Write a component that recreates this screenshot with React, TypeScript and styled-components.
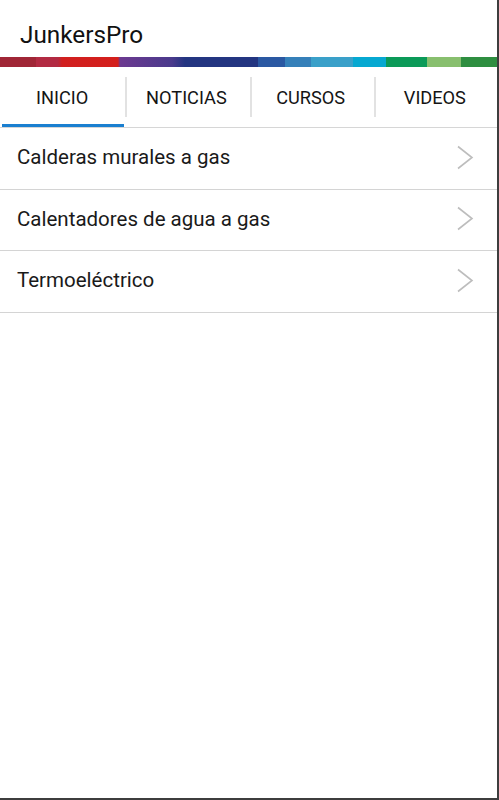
import React from 'react'
import styled, { createGlobalStyle } from 'styled-components'

const GlobalStyle = createGlobalStyle`
  html, body {
    margin: 0;
    padding: 0;
    background: #ffffff;
    font-family: Roboto, "Liberation Sans", Arial, sans-serif;
  }
`

const Screen = styled.div`
  box-sizing: border-box;
  width: 499px;
  height: 800px;
  background: #ffffff;
  border-right: 2px solid #3e3e3e;
  border-bottom: 2px solid #3e3e3e;
  display: flex;
  flex-direction: column;
  overflow: hidden;
`

const TitleBar = styled.header`
  box-sizing: border-box;
  height: 57px;
  flex-shrink: 0;
  padding: 23px 0 0 20px;
  font-size: 24.3px;
  line-height: 24px;
  color: #111;
`

// franja de colores de la marca
const ColorStrip = styled.div`
  height: 10px;
  flex-shrink: 0;
  background: linear-gradient(
    to right,
    #a02636 0px,
    #a02636 36px,
    #b22a42 36px,
    #b22a42 58px,
    #d11f1f 62px,
    #d41f1c 118px,
    #6c3990 120px,
    #4a3a8c 172px,
    #233581 185px,
    #233581 258px,
    #2a58a2 258px,
    #2a58a2 285px,
    #3580b9 285px,
    #3580b9 311px,
    #3aa0c9 311px,
    #3aa0c9 353px,
    #06a8d1 353px,
    #06a8d1 386px,
    #0b9a58 386px,
    #0b9a58 427px,
    #88bf6e 427px,
    #88bf6e 461px,
    #2e8e40 461px,
    #2e8e40 100%
  );
`

const Tabs = styled.nav`
  display: grid;
  grid-template-columns: repeat(4, 1fr);
  height: 60px;
  flex-shrink: 0;
  border-bottom: 1px solid #d6d6d6;
`

const Tab = styled.div<{ $active?: boolean }>`
  position: relative;
  display: flex;
  align-items: center;
  justify-content: center;
  padding-top: 1px;
  font-size: 18.2px;
  color: #141414;

  &:not(:first-child)::before {
    content: '';
    position: absolute;
    left: 1px;
    top: 10px;
    bottom: 10px;
    width: 2px;
    background: #e2e2e2;
  }

  &::after {
    content: '';
    position: absolute;
    left: 2px;
    right: 0;
    bottom: 0;
    height: 3px;
    background: ${(p) => (p.$active ? '#1a7fd0' : 'transparent')};
  }
`

const List = styled.ul`
  list-style: none;
  margin: 0;
  padding: 0;
`

const Row = styled.li`
  box-sizing: border-box;
  height: 61.5px;
  display: flex;
  align-items: center;
  justify-content: space-between;
  padding: 0 23px 2px 17px;
  border-bottom: 1px solid #d4d4d4;
  font-size: 20.5px;
  color: #1a1a1a;
`

const Chevron = () => (
  <svg width="18" height="25" viewBox="0 0 18 25" fill="none">
    <path d="M2 1.5 L16 12.5 L2 23.5" stroke="#bdbdbd" strokeWidth="1.6" />
  </svg>
)

const tabs = ['INICIO', 'NOTICIAS', 'CURSOS', 'VIDEOS']
const items = ['Calderas murales a gas', 'Calentadores de agua a gas', 'Termoeléctrico']

export default function App() {
  return (
    <Screen>
      <GlobalStyle />
      <TitleBar>JunkersPro</TitleBar>
      <ColorStrip />
      <Tabs>
        {tabs.map((t, i) => (
          <Tab key={t} $active={i === 0}>
            {t}
          </Tab>
        ))}
      </Tabs>
      <List>
        {items.map((it) => (
          <Row key={it}>
            {it}
            <Chevron />
          </Row>
        ))}
      </List>
    </Screen>
  )
}
